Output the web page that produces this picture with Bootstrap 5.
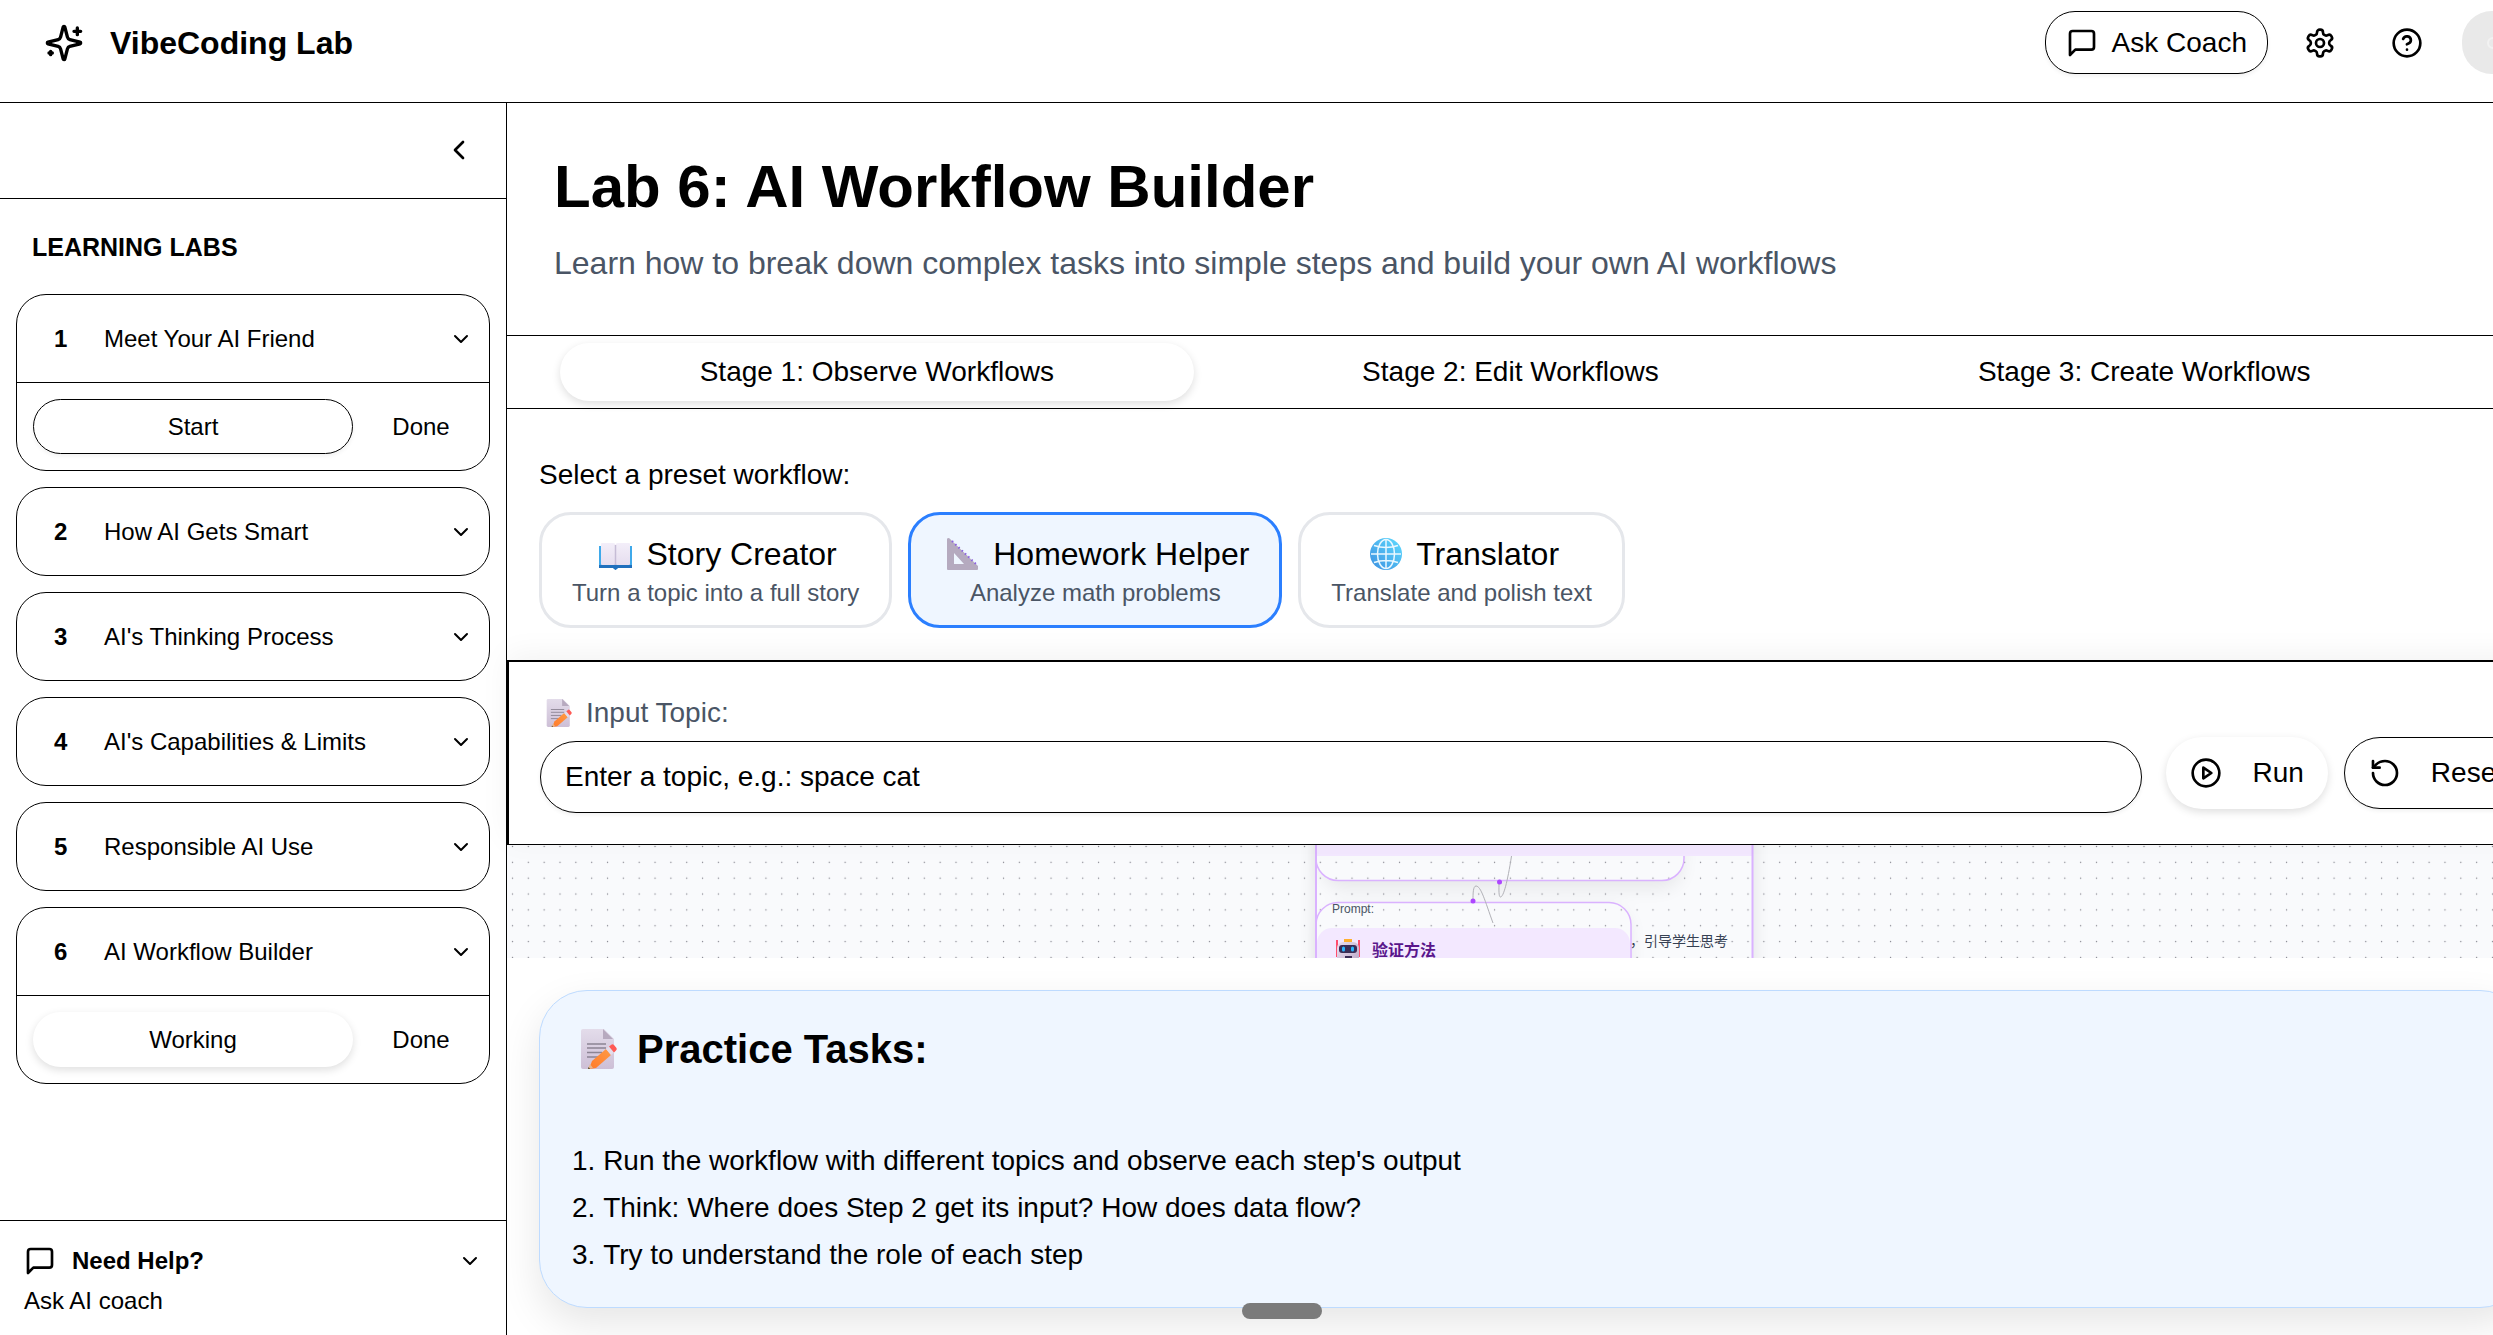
<!DOCTYPE html>
<html lang="en">
<head>
<meta charset="utf-8">
<meta name="viewport" content="width=device-width, initial-scale=1">
<title>VibeCoding Lab</title>
<link href="https://cdn.jsdelivr.net/npm/bootstrap@5.3.0/dist/css/bootstrap.min.css" rel="stylesheet">
<style>
:root { --edge: #000; --muted: #4a5565; }
html, body { height: 100%; }
body { font-family: "Liberation Sans", Arial, sans-serif; font-size: 28px; line-height: 40px; color: #000; background: #fff; overflow: hidden; }
button { font-family: inherit; color: #000; }
svg { flex: none; display: block; }
.ico { width: 32px; height: 32px; fill: none; stroke: currentColor; stroke-width: 2; stroke-linecap: round; stroke-linejoin: round; }
.ico-sm { width: 24px; height: 24px; }
.ico-lg { width: 40px; height: 40px; }

/* the workspace runs on past the right edge of the window */
.workspace { margin-right: -67px; height: 100vh; }
.topbar { height: 103px; border-bottom: 1px solid var(--edge); padding: 11px 36px 28px 44px; }
.brand { font-size: 32px; gap: 26px; }
.tools { gap: 18px; }
.tool-pair { gap: 20px; }
.pill { border: 1px solid var(--edge); border-radius: 30px; background: #fff; box-shadow: 0 2px 4px rgba(0,0,0,.06); }
.pill-raised { border: 0; border-radius: 30px; background: #fff; box-shadow: 0 3px 8px rgba(0,0,0,.13); }
.bare { border: 0; background: none; padding: 0; }
.coach { height: 63px; padding: 0 20px; gap: 14px; }
.tool { width: 67px; height: 63px; }
.avatar { width: 62px; height: 63px; border-radius: 30px; background: #e9e9e9; color: #f2f2f2; }

.side { width: 507px; border-right: 1px solid var(--edge); font-size: 24px; line-height: 32px; }
.side-top { height: 96px; border-bottom: 1px solid var(--edge); padding: 0 31px 2px 0; }
.side-title { font-size: 25px; line-height: 32px; padding: 32px 16px 31px; }
.lab { border: 1px solid var(--edge); border-radius: 30px; overflow: hidden; }
.lab-row { height: 87px; padding: 0 16px 0 21px; }
.lab-num { width: 66px; padding-left: 16px; text-align: left; }
.lab-panel { border-top: 1px solid var(--edge); padding: 16px; gap: 16px; }
.lab-panel button { height: 55px; }
.lab-done { width: 104px; }
.labs { gap: 16px; }
.help { border-top: 1px solid var(--edge); padding: 24px 24px 18px; }

.hero { padding: 48px 47px 52px; }
.hero h1 { font-size: 60px; line-height: 72px; }
.hero p { font-size: 32px; line-height: 40px; color: var(--muted); margin-top: 20px; }
.stages { border-top: 1px solid var(--edge); border-bottom: 1px solid var(--edge); padding: 7px 99px 7px 53px; }
.stages button { height: 58px; }
.presets { padding: 46px 32px 32px; }
.preset-list { gap: 16px; margin-top: 17px; }
.preset { border: 3px solid #e5e7eb; border-radius: 32px; background: #fff; padding: 17px 30px 16px; }
.preset.chosen { border-color: #2b7fff; background: #eff6ff; }
.preset-name { font-size: 32px; line-height: 45px; gap: 8px; }
.preset-note { font-size: 24px; line-height: 32px; color: var(--muted); }
.runner { border-top: 2px solid var(--edge); border-left: 2px solid var(--edge); border-bottom: 1px solid var(--edge); padding: 31px; gap: 24px; background: #fff; box-shadow: 0 -6px 28px rgba(0,0,0,.05); }
.runner label { color: var(--muted); gap: 10px; padding-left: 4px; margin-bottom: 8px; }
.topic { height: 72px; border-radius: 36px; padding: 0 24px; font-size: 28px; color: #000; }
.topic::placeholder { color: #000; opacity: 1; }
.act { height: 72px; border-radius: 36px; padding: 0 24px; gap: 30px; }
.board { height: 113px; background: #f9fafc; }
.tasks { margin: 32px 32px 0; border: 1px solid #bedbff; border-radius: 48px; background: #eff6ff; padding: 30px 32px 34px; box-shadow: 0 16px 40px rgba(0,0,0,.1); }
.tasks h2 { font-size: 40px; line-height: 56px; gap: 13px; padding-left: 4px; margin-bottom: 60px; }
.tasks ol { list-style-position: inside; padding: 0; line-height: 47px; margin-bottom: -5px; }
.grip { position: fixed; left: 1242px; bottom: 16px; width: 80px; height: 16px; border-radius: 8px; background: #7b7b7b; }
</style>
</head>
<body>
<svg width="0" height="0" class="position-absolute" aria-hidden="true">
  <defs>
    <symbol id="down" viewBox="0 0 24 24"><path d="m6 9 6 6 6-6"/></symbol>
    <symbol id="chat" viewBox="0 0 24 24"><path d="M21 15a2 2 0 0 1-2 2H7l-4 4V5a2 2 0 0 1 2-2h14a2 2 0 0 1 2 2z"/></symbol>
    <linearGradient id="paper" x1="0" y1="0" x2="0" y2="1"><stop offset="0" stop-color="#e3dcea"/><stop offset="1" stop-color="#cdbfd6"/></linearGradient>
    <linearGradient id="pen" x1="0" y1="1" x2="1" y2="0"><stop offset="0" stop-color="#ff7a2a"/><stop offset="1" stop-color="#ff9a45"/></linearGradient>
    <linearGradient id="page" x1="0" y1="0" x2="0" y2="1"><stop offset="0" stop-color="#f3eef9"/><stop offset="1" stop-color="#e6deef"/></linearGradient>
    <linearGradient id="globe" x1="1" y1="0" x2="0" y2="1"><stop offset="0" stop-color="#5fdcff"/><stop offset="1" stop-color="#3c8fe0"/></linearGradient>
    <symbol id="memo" viewBox="0 0 40 40">
      <path d="M3 0h21l10 10v28a2 2 0 0 1-2 2H3a2 2 0 0 1-2-2V2a2 2 0 0 1 2-2z" fill="url(#paper)"/>
      <path d="M23 0l10 10H23z" fill="#b7aabf"/>
      <path d="M7 15h19M7 19h19M7 23.500h15M7 28h11" stroke="#8c8494" stroke-width="1.300"/>
      <path d="M26 20l5 6-15 13-7 1 3-8z" fill="url(#pen)"/>
      <path d="M10 35l3 4-5 1z" fill="#e8b58c"/><path d="M8.500 38l1.500 2-2 .5z" fill="#442"/>
      <path d="M26 20l3-2.500 5 6-3 2.500z" fill="#e4dce9"/>
      <path d="M29 17.500l2-1.500a2 2 0 0 1 3 0l2.500 3a2 2 0 0 1-.5 2.500L34 23.500z" fill="#ff5a55"/>
    </symbol>
  </defs>
</svg>

<div class="workspace d-flex flex-column">
  <header class="topbar d-flex align-items-center justify-content-between">
    <div class="brand d-flex align-items-center fw-bold">
      <svg class="ico ico-lg" viewBox="0 0 24 24"><path d="M9.937 15.500A2 2 0 0 0 8.500 14.063l-6.135-1.582a.5.5 0 0 1 0-.962L8.500 9.936A2 2 0 0 0 9.937 8.500l1.582-6.135a.5.5 0 0 1 .963 0L14.063 8.500A2 2 0 0 0 15.500 9.937l6.135 1.581a.5.5 0 0 1 0 .964L15.500 14.063a2 2 0 0 0-1.437 1.437l-1.582 6.135a.5.5 0 0 1-.963 0z"/><path d="M20 3v4M22 5h-4M4 17v2M5 18H3"/></svg>
      <span>VibeCoding Lab</span>
    </div>
    <div class="tools d-flex align-items-center">
      <button type="button" class="coach pill d-flex align-items-center"><svg class="ico"><use href="#chat"/></svg>Ask Coach</button>
      <div class="tool-pair d-flex me-1">
        <button type="button" class="bare tool d-flex align-items-center justify-content-center" aria-label="Settings"><svg class="ico" viewBox="0 0 24 24"><path d="M12.220 2h-.44a2 2 0 0 0-2 2v.18a2 2 0 0 1-1 1.730l-.43.25a2 2 0 0 1-2 0l-.15-.08a2 2 0 0 0-2.730.73l-.22.38a2 2 0 0 0 .73 2.730l.15.1a2 2 0 0 1 1 1.720v.51a2 2 0 0 1-1 1.740l-.15.09a2 2 0 0 0-.73 2.730l.22.38a2 2 0 0 0 2.730.73l.15-.08a2 2 0 0 1 2 0l.43.25a2 2 0 0 1 1 1.730V20a2 2 0 0 0 2 2h.44a2 2 0 0 0 2-2v-.18a2 2 0 0 1 1-1.730l.43-.25a2 2 0 0 1 2 0l.15.08a2 2 0 0 0 2.730-.73l.22-.39a2 2 0 0 0-.73-2.730l-.15-.08a2 2 0 0 1-1-1.740v-.5a2 2 0 0 1 1-1.740l.15-.09a2 2 0 0 0 .73-2.730l-.22-.38a2 2 0 0 0-2.730-.73l-.15.08a2 2 0 0 1-2 0l-.43-.25a2 2 0 0 1-1-1.730V4a2 2 0 0 0-2-2z"/><circle cx="12" cy="12" r="3"/></svg></button>
        <button type="button" class="bare tool d-flex align-items-center justify-content-center" aria-label="Help"><svg class="ico" viewBox="0 0 24 24"><circle cx="12" cy="12" r="10"/><path d="M9.090 9a3 3 0 0 1 5.830 1c0 2-3 3-3 3M12 17h.01"/></svg></button>
      </div>
      <button type="button" class="bare avatar d-flex align-items-center justify-content-center" aria-label="Account"><svg width="12" height="12" viewBox="0 0 12 12" fill="none" stroke="currentColor" stroke-width="2"><circle cx="6" cy="6" r="5"/></svg></button>
    </div>
  </header>

  <div class="d-flex flex-grow-1">
    <aside class="side d-flex flex-column flex-shrink-0">
      <div class="side-top d-flex align-items-center justify-content-end"><button type="button" class="bare" aria-label="Collapse sidebar"><svg class="ico" viewBox="0 0 24 24"><path d="m15 18-6-6 6-6"/></svg></button></div>
      <nav class="px-3 flex-grow-1" aria-label="Labs">
        <h2 class="side-title fw-bold m-0">LEARNING LABS</h2>
        <div class="labs d-flex flex-column">
          <div class="lab">
            <button type="button" class="lab-row bare w-100 d-flex align-items-center"><span class="lab-num fw-bold">1</span><span>Meet Your AI Friend</span><svg class="ico ico-sm ms-auto"><use href="#down"/></svg></button>
            <div class="lab-panel d-flex"><button type="button" class="pill flex-grow-1">Start</button><button type="button" class="bare lab-done">Done</button></div>
          </div>
          <div class="lab"><button type="button" class="lab-row bare w-100 d-flex align-items-center"><span class="lab-num fw-bold">2</span><span>How AI Gets Smart</span><svg class="ico ico-sm ms-auto"><use href="#down"/></svg></button></div>
          <div class="lab"><button type="button" class="lab-row bare w-100 d-flex align-items-center"><span class="lab-num fw-bold">3</span><span>AI's Thinking Process</span><svg class="ico ico-sm ms-auto"><use href="#down"/></svg></button></div>
          <div class="lab"><button type="button" class="lab-row bare w-100 d-flex align-items-center"><span class="lab-num fw-bold">4</span><span>AI's Capabilities &amp; Limits</span><svg class="ico ico-sm ms-auto"><use href="#down"/></svg></button></div>
          <div class="lab"><button type="button" class="lab-row bare w-100 d-flex align-items-center"><span class="lab-num fw-bold">5</span><span>Responsible AI Use</span><svg class="ico ico-sm ms-auto"><use href="#down"/></svg></button></div>
          <div class="lab">
            <button type="button" class="lab-row bare w-100 d-flex align-items-center"><span class="lab-num fw-bold">6</span><span>AI Workflow Builder</span><svg class="ico ico-sm ms-auto"><use href="#down"/></svg></button>
            <div class="lab-panel d-flex"><button type="button" class="pill-raised flex-grow-1">Working</button><button type="button" class="bare lab-done">Done</button></div>
          </div>
        </div>
      </nav>
      <div class="help">
        <button type="button" class="bare w-100 d-flex align-items-center fw-bold"><svg class="ico me-3"><use href="#chat"/></svg>Need Help?<svg class="ico ico-sm ms-auto"><use href="#down"/></svg></button>
        <div class="mt-2">Ask AI coach</div>
      </div>
    </aside>

    <main class="flex-grow-1">
      <section class="hero">
        <h1 class="fw-bold m-0">Lab 6: AI Workflow Builder</h1>
        <p class="mb-0">Learn how to break down complex tasks into simple steps and build your own AI workflows</p>
      </section>
      <div class="stages d-flex" role="tablist">
        <button type="button" role="tab" aria-selected="true" class="pill-raised col-4">Stage 1: Observe Workflows</button>
        <button type="button" role="tab" aria-selected="false" class="bare col-4">Stage 2: Edit Workflows</button>
        <button type="button" role="tab" aria-selected="false" class="bare col-4">Stage 3: Create Workflows</button>
      </div>
      <section class="presets">
        <div>Select a preset workflow:</div>
        <div class="preset-list d-flex">
          <button type="button" class="preset">
            <span class="preset-name d-flex align-items-center justify-content-center">
              <svg width="44" height="44" viewBox="0 0 44 44"><path d="M5 13h33v22H24l-2.500 2-2.500-2H5z" fill="#3fa9ea"/><path d="M5 32h33v3H24l-2.500 2-2.500-2H5z" fill="#2070bd"/><path d="M8 10h11q2.500 0 2.500 2v19q0 1-2 1H8q-1 0-1-1V11q0-1 1-1zM35 10H24q-2.500 0-2.500 2v19q0 1 2 1H35q1 0 1-1V11q0-1-1-1z" fill="url(#page)"/><path d="M21.500 12v20" stroke="#c6bcd6" stroke-width="1.500"/></svg>
              <span>Story Creator</span></span>
            <span class="preset-note d-block">Turn a topic into a full story</span>
          </button>
          <button type="button" class="preset chosen">
            <span class="preset-name d-flex align-items-center justify-content-center">
              <svg width="44" height="44" viewBox="0 0 44 44"><path fill-rule="evenodd" d="M8 5l29 28v3q0 1-1 1H7q-1 0-1-1V6q0-1 2-1zM13 20v11h10z" fill="#b5aabf"/><path d="M11 8l26 25" stroke="#8a5fe0" stroke-width="2" stroke-dasharray="1.500 3"/></svg>
              <span>Homework Helper</span></span>
            <span class="preset-note d-block">Analyze math problems</span>
          </button>
          <button type="button" class="preset">
            <span class="preset-name d-flex align-items-center justify-content-center">
              <svg width="44" height="44" viewBox="0 0 44 44"><circle cx="22" cy="21" r="16" fill="url(#globe)"/><path d="M22 6v30M7 21h30M10 12.500q12 4 24 0M10 29.500q12-4 24 0" fill="none" stroke="#eaf8ff" stroke-width="1.500"/><ellipse cx="22" cy="21" rx="8.500" ry="14.500" fill="none" stroke="#eaf8ff" stroke-width="1.500"/></svg>
              <span>Translator</span></span>
            <span class="preset-note d-block">Translate and polish text</span>
          </button>
        </div>
      </section>
      <form class="runner d-flex align-items-end position-relative">
        <div class="flex-grow-1">
          <label for="topic" class="d-flex align-items-center"><svg width="32" height="28" viewBox="0 0 40 40"><use href="#memo"/></svg>Input Topic:</label>
          <input id="topic" type="text" class="topic pill w-100 d-block" placeholder="Enter a topic, e.g.: space cat">
        </div>
        <div class="d-flex gap-3 mb-1">
          <button type="button" class="act pill-raised d-flex align-items-center"><svg class="ico" viewBox="0 0 24 24"><circle cx="12" cy="12" r="10"/><path d="m10 8 6 4-6 4z"/></svg>Run</button>
          <button type="reset" class="act pill d-flex align-items-center"><svg class="ico" viewBox="0 0 24 24"><path d="M3 12a9 9 0 1 0 9-9 9.750 9.750 0 0 0-6.740 2.740L3 8"/><path d="M3 3v5h5"/></svg>Reset</button>
        </div>
      </form>
      <div class="board">
        <svg width="100%" height="113" font-family="'Liberation Sans','Noto Sans CJK SC',sans-serif">
          <defs>
            <pattern id="dots" width="15.840" height="15.850" patternUnits="userSpaceOnUse"><circle cx="5.500" cy="1.500" r=".7" fill="#85858e"/></pattern>
            <filter id="soft" x="-20%" y="-40%" width="140%" height="180%"><feGaussianBlur stdDeviation="9"/></filter>
            <linearGradient id="face" x1="0" y1="0" x2="1" y2="1"><stop offset="0" stop-color="#eadff0"/><stop offset="1" stop-color="#b9a5c6"/></linearGradient>
          </defs>
          <rect x="809" y="-60" width="437" height="260" fill="#000" opacity=".1" filter="url(#soft)"/>
          <rect x="809" y="0" width="437" height="113" fill="#f9fafc"/>
          <g fill="#000" opacity=".07" filter="url(#soft)"><rect x="815" y="-60" width="360" height="104" rx="22"/><rect x="815" y="64" width="308" height="90" rx="22"/></g>
          <path d="M809 0v13a22 22 0 0 0 22 22.500h324a22 22 0 0 0 22-22.500V0zM809 113V79.500a22 22 0 0 1 22-22h271a22 22 0 0 1 22 22V113z" fill="#f9fafc"/>
          <rect width="100%" height="113" fill="url(#dots)"/>
          <rect x="809" y="-4" width="436" height="15" fill="#f3e8ff"/>
          <path d="M809 -2V113M1245.500 -2V113" stroke="#dab2ff" stroke-width="2"/>
          <path d="M809 11v2a22 22 0 0 0 22 22.500h324a22 22 0 0 0 22-22.500v-2" fill="none" stroke="#dab2ff" stroke-width="1.500"/>
          <path d="M809 120V79.500a22 22 0 0 1 22-22h271a22 22 0 0 1 22 22V120" fill="none" stroke="#dab2ff" stroke-width="1.500"/>
          <path d="M810 120V98a15 15 0 0 1 15-15h283a15 15 0 0 1 15 15V120z" fill="#f3e8ff"/>
          <path d="M1004.500 11c-4 26-8 41-11 41-2 0-1.500-8-1.500-14M966 55c0-6 0-14 3-14 5 0 9 15 17 37" fill="none" stroke="#b1b1b7"/>
          <circle cx="992.500" cy="37" r="2.500" fill="#ad46ff"/><circle cx="966" cy="56" r="2.500" fill="#ad46ff"/>
          <text x="825" y="68" font-size="12" fill="#4a5565">Prompt:</text>
          <text x="1123" y="101" font-size="14" fill="#364153">，引导学生思考</text>
          <text x="865" y="111" font-size="16" font-weight="bold" fill="#59168b">验证方法</text>
          <g><path d="M830 95v17M852 95v17" stroke="#ff4d6d" stroke-width="2"/><rect x="837" y="94" width="8" height="5" fill="#ffb02e"/><rect x="830" y="97" width="22" height="24" rx="6" fill="url(#face)"/><rect x="832" y="100" width="18" height="8" rx="3" fill="#3a2c55"/><rect x="835" y="101.500" width="3" height="5" rx="1.500" fill="#29b6ff"/><rect x="844" y="101.500" width="3" height="5" rx="1.500" fill="#29b6ff"/><rect x="838" y="111" width="7" height="3" fill="#3a2c55"/></g>
        </svg>
      </div>
      <section class="tasks">
        <h2 class="fw-bold d-flex align-items-center"><svg width="48" height="40" viewBox="0 0 40 40"><use href="#memo"/></svg>Practice Tasks:</h2>
        <ol>
          <li>Run the workflow with different topics and observe each step's output</li>
          <li>Think: Where does Step 2 get its input? How does data flow?</li>
          <li>Try to understand the role of each step</li>
        </ol>
      </section>
    </main>
  </div>
</div>
<div class="grip"></div>
<script src="https://cdn.jsdelivr.net/npm/bootstrap@5.3.0/dist/js/bootstrap.bundle.min.js"></script>
</body>
</html>
